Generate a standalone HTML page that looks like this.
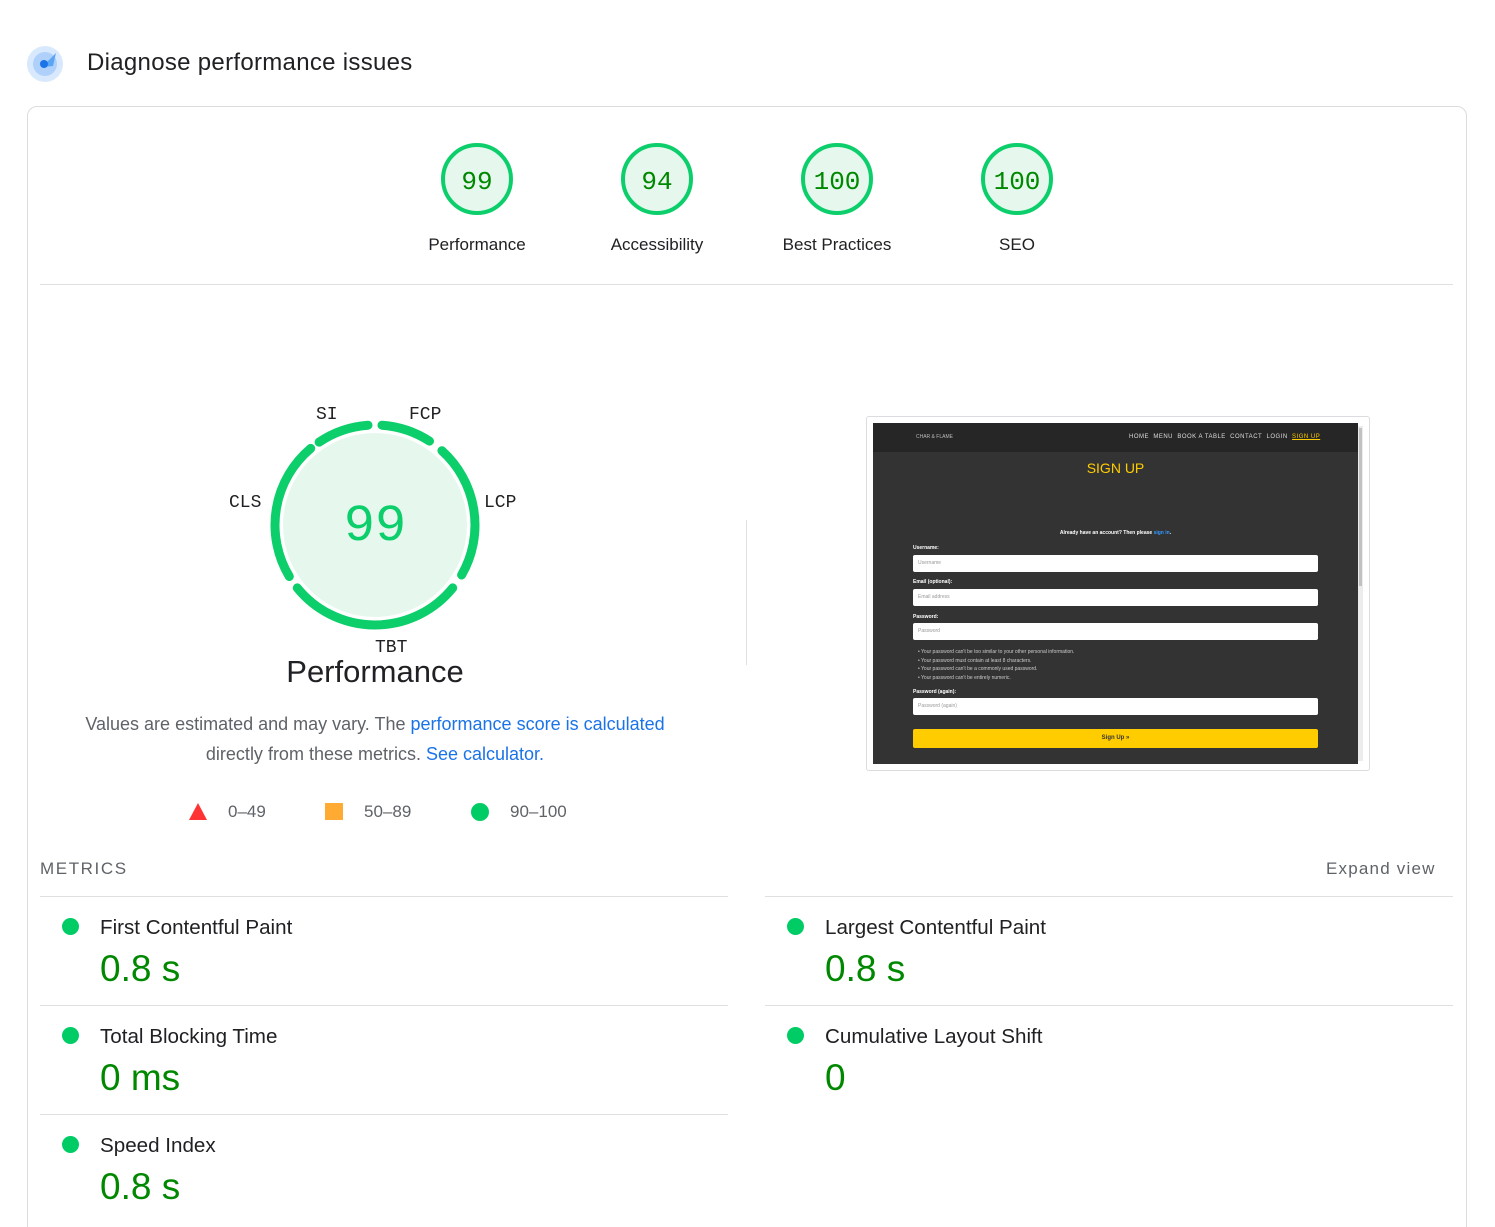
<!DOCTYPE html>
<html><head><meta charset="utf-8"><style>
*{margin:0;padding:0;box-sizing:border-box}
html,body{width:1495px;height:1227px;overflow:hidden}
body{background:#fff;font-family:"Liberation Sans",Arial,sans-serif;color:#202124;position:relative}
.a{position:absolute}
.card{position:absolute;left:27px;top:106px;width:1440px;height:1200px;border:1px solid #dadce0;border-radius:10px}
.lbl{position:absolute;width:180px;text-align:center;font-size:17px;color:#202124;top:235px}
.hr{position:absolute;height:1px;background:#e0e0e0}
.dot{position:absolute;width:17px;height:17px;border-radius:50%;background:#0c6}
.mt{position:absolute;font-size:20.6px;color:#202124}
.mv{position:absolute;font-size:37px;color:#080}
a{color:#1a73e8;text-decoration:none}
</style></head><body>
<svg class="a" style="left:26px;top:45px" width="38" height="38" viewBox="0 0 38 38">
<circle cx="19" cy="19" r="18" fill="#d8e9fd"/><circle cx="19" cy="19" r="12" fill="#aed0fb"/>
<path d="M16 22 L30 8 L27 21 Z" fill="#5aa6f5"/><circle cx="18" cy="19" r="4" fill="#1a73e8"/></svg>
<div class="a" style="left:87px;top:49px;font-size:24px;letter-spacing:0.3px;color:#202124">Diagnose performance issues</div>
<div class="card"></div>

<svg class="a" style="left:0;top:0" width="1495" height="300">
<g fill="#e6f8ee" stroke="#0cce6b" stroke-width="4">
<circle cx="477" cy="179" r="34"/><circle cx="657" cy="179" r="34"/><circle cx="837" cy="179" r="34"/><circle cx="1017" cy="179" r="34"/></g>
<g font-family="Liberation Mono,monospace" font-size="26" fill="#080" text-anchor="middle">
<text x="477" y="189">99</text><text x="657" y="189">94</text><text x="837" y="189">100</text><text x="1017" y="189">100</text></g>
</svg>
<div class="lbl" style="left:387px">Performance</div>
<div class="lbl" style="left:567px">Accessibility</div>
<div class="lbl" style="left:747px">Best Practices</div>
<div class="lbl" style="left:927px">SEO</div>
<div class="hr" style="left:40px;top:284px;width:1413px"></div>

<svg class="a" style="left:0;top:380px" width="700" height="300" viewBox="0 380 700 300">
<circle cx="375" cy="525" r="92" fill="#e6f8ee"/>
<g fill="none" stroke="#0cce6b" stroke-width="9" stroke-linecap="round">
<path d="M382 425.2 A100 100 0 0 1 429.5 441.1"/>
<path d="M441.9 450.7 A100 100 0 0 1 461.6 575"/>
<path d="M452.7 587.9 A100 100 0 0 1 297.3 587.9"/>
<path d="M289.3 576.5 A100 100 0 0 1 310.7 448.4"/>
<path d="M319.1 442.1 A100 100 0 0 1 368 425.2"/>
</g>
<text x="375" y="540" text-anchor="middle" font-family="Liberation Mono,monospace" font-size="52" fill="#0cce6b">99</text>
<g font-family="Liberation Mono,monospace" font-size="18" fill="#202124">
<text x="316" y="419">SI</text><text x="409" y="419">FCP</text><text x="229" y="507">CLS</text><text x="484" y="507">LCP</text><text x="375" y="652">TBT</text></g>
</svg>
<div class="a" style="left:175px;top:654px;width:400px;text-align:center;font-size:31px;color:#202124">Performance</div>
<div class="a" style="left:40px;top:709px;width:670px;text-align:center;font-size:18px;line-height:30px;color:#5f6368">Values are estimated and may vary. The <a>performance score is calculated</a><br>directly from these metrics. <a>See calculator.</a></div>
<svg class="a" style="left:188px;top:802px" width="20" height="18"><path d="M10 1 L19 18 L1 18Z" fill="#f33"/></svg>
<div class="a" style="left:228px;top:802px;font-size:17px;color:#5f6368">0–49</div>
<div class="a" style="left:325px;top:803px;width:18px;height:17px;background:#fa3"></div>
<div class="a" style="left:364px;top:802px;font-size:17px;color:#5f6368">50–89</div>
<div class="a" style="left:471px;top:803px;width:18px;height:18px;border-radius:50%;background:#0c6"></div>
<div class="a" style="left:510px;top:802px;font-size:17px;color:#5f6368">90–100</div>

<div class="a" style="left:746px;top:520px;width:1px;height:145px;background:#e0e0e0"></div>

<div class="a" style="left:866px;top:416px;width:504px;height:355px;border:1px solid #dadce0;border-radius:3px;background:#fff"></div>
<div class="a" style="left:873px;top:423px;width:485px;height:341px;background:#333"></div>
<div class="a" style="left:873px;top:423px;width:485px;height:29px;background:#262626"></div>
<div class="a" style="left:1358px;top:426px;width:5px;height:335px;background:#ececec"></div>
<div class="a" style="left:1359px;top:428px;width:3px;height:158px;background:#c1c1c1"></div>
<div class="a" style="left:916px;top:434px;font-size:5px;color:#bbb">CHAR &amp; FLAME</div>
<div class="a" style="left:1129px;top:434px;font-size:6px;color:#ddd;letter-spacing:.5px">HOME&nbsp; MENU&nbsp; BOOK A TABLE&nbsp; CONTACT&nbsp; LOGIN&nbsp; <span style="color:#fc0;text-decoration:underline">SIGN UP</span></div>
<div class="a" style="left:873px;top:460px;width:485px;text-align:center;font-size:14px;color:#fc0">SIGN UP</div>
<div class="a" style="left:873px;top:530px;width:485px;text-align:center;font-size:5px;font-weight:bold;color:#fff">Already have an account? Then please <span style="color:#39f">sign in</span>.</div>
<div class="a" style="left:913px;top:545px;font-size:5px;font-weight:bold;color:#fff">Username:</div>
<div class="a" style="left:913px;top:555px;width:405px;height:17px;background:#fff;border-radius:2px;font-size:5px;color:#999;padding:5px">Username</div>
<div class="a" style="left:913px;top:579px;font-size:5px;font-weight:bold;color:#fff">Email (optional):</div>
<div class="a" style="left:913px;top:589px;width:405px;height:17px;background:#fff;border-radius:2px;font-size:5px;color:#999;padding:5px">Email address</div>
<div class="a" style="left:913px;top:614px;font-size:5px;font-weight:bold;color:#fff">Password:</div>
<div class="a" style="left:913px;top:623px;width:405px;height:17px;background:#fff;border-radius:2px;font-size:5px;color:#999;padding:5px">Password</div>
<div class="a" style="left:918px;top:648px;font-size:5px;line-height:8.7px;color:#ccc">• Your password can't be too similar to your other personal information.<br>• Your password must contain at least 8 characters.<br>• Your password can't be a commonly used password.<br>• Your password can't be entirely numeric.</div>
<div class="a" style="left:913px;top:689px;font-size:5px;font-weight:bold;color:#fff">Password (again):</div>
<div class="a" style="left:913px;top:698px;width:405px;height:17px;background:#fff;border-radius:2px;font-size:5px;color:#999;padding:5px">Password (again)</div>
<div class="a" style="left:913px;top:729px;width:405px;height:19px;background:#fc0;border-radius:2px;font-size:6px;font-weight:bold;color:#333;text-align:center;line-height:19px">Sign Up »</div>

<div class="a" style="left:40px;top:859px;font-size:17px;letter-spacing:1.6px;color:#5f6368">METRICS</div>
<div class="a" style="left:1326px;top:859px;font-size:17px;letter-spacing:1.2px;color:#5f6368">Expand view</div>
<div class="hr" style="left:40px;top:896px;width:688px"></div>
<div class="hr" style="left:765px;top:896px;width:688px"></div>
<div class="hr" style="left:40px;top:1005px;width:688px"></div>
<div class="hr" style="left:765px;top:1005px;width:688px"></div>
<div class="hr" style="left:40px;top:1114px;width:688px"></div>

<div class="dot" style="left:62px;top:918px"></div><div class="mt" style="left:100px;top:916px">First Contentful Paint</div><div class="mv" style="left:100px;top:948px">0.8 s</div>
<div class="dot" style="left:787px;top:918px"></div><div class="mt" style="left:825px;top:916px">Largest Contentful Paint</div><div class="mv" style="left:825px;top:948px">0.8 s</div>
<div class="dot" style="left:62px;top:1027px"></div><div class="mt" style="left:100px;top:1025px">Total Blocking Time</div><div class="mv" style="left:100px;top:1057px">0 ms</div>
<div class="dot" style="left:787px;top:1027px"></div><div class="mt" style="left:825px;top:1025px">Cumulative Layout Shift</div><div class="mv" style="left:825px;top:1057px">0</div>
<div class="dot" style="left:62px;top:1136px"></div><div class="mt" style="left:100px;top:1134px">Speed Index</div><div class="mv" style="left:100px;top:1166px">0.8 s</div>
</body></html>
